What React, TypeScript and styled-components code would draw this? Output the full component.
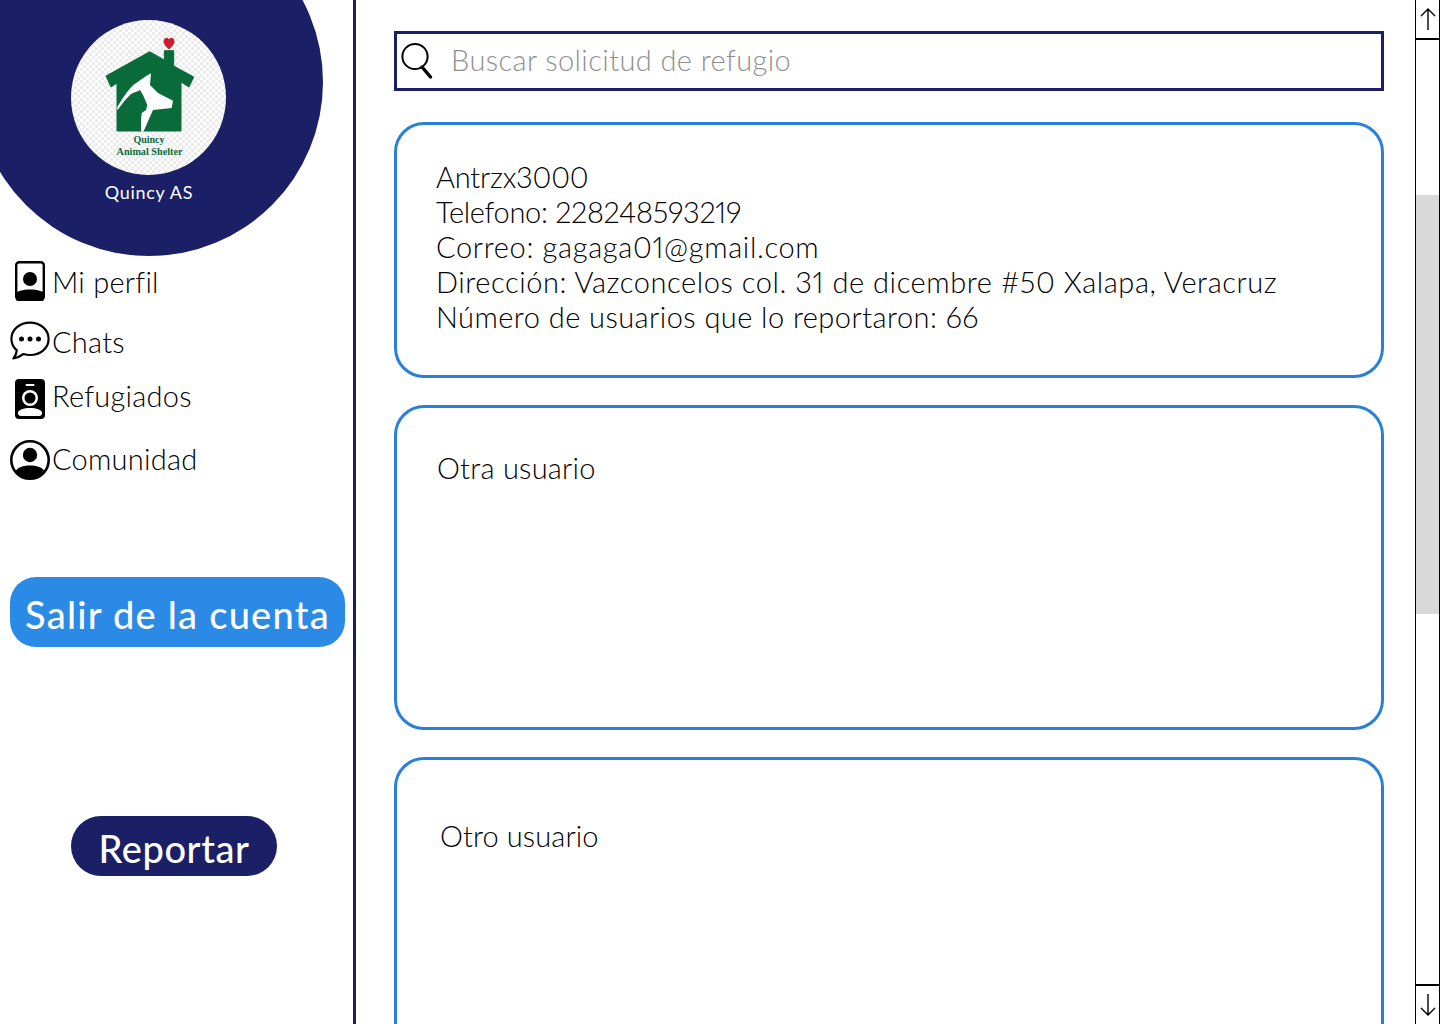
import styled, { createGlobalStyle } from 'styled-components';

const GlobalStyle = createGlobalStyle`
  * {
    box-sizing: border-box;
  }
  html, body {
    margin: 0;
    height: 1024px;
    overflow: hidden;
    background: #fff;
    font-family: 'Lato', 'Noto Sans', sans-serif;
    font-variant-numeric: proportional-nums;
  }
`;

const Page = styled.div`
  display: flex;
  width: 1440px;
  height: 1024px;
  overflow: hidden;
`;

// ----------------------------- //

const Sidebar = styled.aside`
  display: flex;
  flex-direction: column;
  flex: 0 0 356px;
  height: 100%;
  border-right: 3px solid #1b1f66;
  overflow: hidden;
`;

const ProfileDisc = styled.div`
  display: flex;
  flex-direction: column;
  align-items: center;
  flex: 0 0 348px;
  width: 348px;
  margin: -92px 0 0 -25px;
  padding-top: 112px;
  border-radius: 50%;
  background: #1b1f66;
`;

const LogoBadge = styled.div`
  width: 155px;
  height: 155px;
  margin-right: 2px;
  border-radius: 50%;
  overflow: hidden;
  background-color: #fff;
  background-image: conic-gradient(#ececec 25%, #fff 0 50%, #ececec 0 75%, #fff 0);
  background-size: 6px 6px;

  > svg {
    display: block;
  }
`;

const ShelterName = styled.div`
  margin-top: 6px;
  color: #fff;
  font-size: 18px;
  line-height: 22px;
  letter-spacing: 0.7px;
`;

const Nav = styled.nav`
  display: flex;
  flex-direction: column;
  padding: 5px 0 0 10px;
`;

const NavItem = styled.div<{ $gap: number; $shift: number }>`
  display: flex;
  align-items: center;
  height: 40px;
  margin-bottom: ${(p) => p.$gap}px;
  color: #000;
  font-size: 29px;
  font-weight: 300;
  letter-spacing: 0.25px;

  > span {
    transform: translateY(${(p) => p.$shift}px);
  }
`;

const IconBox = styled.div`
  display: flex;
  justify-content: center;
  flex: 0 0 42px;
  height: 40px;
  padding-right: 2px;
`;

const LogoutButton = styled.button`
  width: 335px;
  height: 70px;
  margin: 97px 0 0 10px;
  padding: 4px 0 0;
  border: 0;
  border-radius: 26px;
  background: #2a8ae6;
  color: #fff;
  font: 500 38px 'Lato', sans-serif;
  letter-spacing: 1.25px;
`;

const ReportButton = styled.button`
  width: 206px;
  height: 60px;
  margin: 169px 0 0 71px;
  padding: 4px 0 0;
  border: 0;
  border-radius: 30px;
  background: #1b1f66;
  color: #fff;
  font: 500 38px 'Lato', sans-serif;
  letter-spacing: 0.6px;
`;

// ----------------------------- //

const Main = styled.main`
  display: flex;
  flex-direction: column;
  flex: 1;
  padding: 31px 31px 0 38px;
  overflow: hidden;
`;

const SearchBar = styled.label`
  display: flex;
  align-items: center;
  flex: 0 0 60px;
  margin-bottom: 31px;
  padding-left: 4px;
  border: 3px solid #1b1f66;
  background: #fff;

  > svg {
    flex: 0 0 auto;
  }
`;

const SearchInput = styled.input`
  flex: 1;
  height: 100%;
  margin-left: 18px;
  padding: 0 0 4px;
  border: 0;
  outline: 0;
  background: transparent;
  font: 300 29px 'Lato', sans-serif;
  letter-spacing: 0.4px;

  &::placeholder {
    color: #8f8f8f;
    opacity: 1;
  }
`;

const CardList = styled.div`
  display: flex;
  flex-direction: column;
  gap: 27px;
`;

const Card = styled.section<{ $height: number; $top: number; $left: number }>`
  flex: 0 0 ${(p) => p.$height}px;
  padding: ${(p) => p.$top}px 20px 0 ${(p) => p.$left}px;
  border: 3px solid #2a80d8;
  border-radius: 30px;
  color: #000;
  font-size: 29px;
  font-weight: 300;
  line-height: 35px;
`;

const CardLine = styled.div<{ $tracking: number }>`
  white-space: nowrap;
  letter-spacing: ${(p) => p.$tracking}px;
`;

// ----------------------------- //

const Scrollbar = styled.div`
  display: flex;
  flex-direction: column;
  flex: 0 0 25px;
  height: 100%;
  border-left: 1px solid #000;
  border-right: 1px solid #000;
`;

const ScrollButton = styled.div<{ $edge: 'top' | 'bottom' }>`
  display: flex;
  align-items: center;
  justify-content: center;
  flex: 0 0 40px;
  border-${(p) => (p.$edge === 'top' ? 'bottom' : 'top')}: 2px solid #000;
`;

const ScrollTrack = styled.div`
  flex: 1;
  padding-top: 155px;
`;

const ScrollThumb = styled.div`
  height: 419px;
  background: #d9d9d9;
`;

// ----------------------------- //

function ShelterLogo() {
  return (
    <svg width="155" height="155" viewBox="71 20 155 155">
      <path
        d="M169 49.5 C166 46.5 163.5 44.5 163.5 41.5 C163.5 37.5 168 36.5 169 39.5 C170 36.5 174.5 37.5 174.5 41.5 C174.5 44.5 172 46.5 169 49.5 Z"
        fill="#c8202f"
      />
      <path
        d="M149.7 51.7 L164.3 60 L164.3 50.7 L173.7 50.7 L173.7 66 L193.7 77 L189 87 L181 82 L181 131 L117 131 L117 83 L111 87 L106 76 Z"
        fill="#0a6b3a"
        stroke="#0a6b3a"
        strokeWidth="1"
        strokeLinejoin="round"
      />
      <path
        d="M117.3 107 C122 99 128 90 133.3 85 L145 76.7 L147 75.5 L151 73.3 L150 85 L158 93 L173 100.7 L171.7 108 L153 110 L150 116.7 L143.5 131.5 L141.2 131.5 L141 120 L141.7 113 L146 110 L147.3 105 L143 95 L140 90 L136.7 91.7 C134 92.5 132 93 130 95 C125 100 121 105 117.3 110.5 Z"
        fill="#fff"
      />
      <text
        x="149"
        y="143"
        textAnchor="middle"
        fontFamily="Liberation Serif, serif"
        fontWeight="700"
        fontSize="10"
        fill="#0a6b3a"
      >
        Quincy
      </text>
      <text
        x="149.5"
        y="155"
        textAnchor="middle"
        fontFamily="Liberation Serif, serif"
        fontWeight="700"
        fontSize="10.2"
        fill="#0a6b3a"
      >
        Animal Shelter
      </text>
    </svg>
  );
}

function ProfileIcon() {
  return (
    <svg width="30" height="40" viewBox="0 0 30 40">
      <rect x="1.2" y="1.2" width="27.6" height="37.6" rx="3" fill="#fff" stroke="#000" strokeWidth="2.4" />
      <circle cx="15" cy="18" r="7" />
      <path d="M1 38 V33 C1 30 8 28.5 15 28.5 C22 28.5 29 30 29 33 V38 Q29 40 27 40 H3 Q1 40 1 38 Z" />
    </svg>
  );
}

function ChatIcon() {
  return (
    <svg width="40" height="40" viewBox="0 0 40 40">
      <path
        d="M20 1.6 C30 1.6 38.6 8.4 38.6 18 C38.6 27.6 30 34 20 34 C17.5 34 15.5 33.6 13.5 33 C10 35.5 6.5 37 3.4 37.5 C5.5 35 6.6 32.5 6.8 29.4 C3.4 26.4 1.4 22.6 1.4 18 C1.4 8.4 10 1.6 20 1.6 Z"
        fill="none"
        stroke="#000"
        strokeWidth="2.2"
        strokeLinejoin="round"
      />
      <circle cx="11.5" cy="18" r="2.5" />
      <circle cx="20" cy="18" r="2.5" />
      <circle cx="28.5" cy="18" r="2.5" />
    </svg>
  );
}

function BadgeIcon() {
  return (
    <svg width="30" height="40" viewBox="0 0 30 40">
      <rect width="30" height="40" rx="4" />
      <rect x="10.5" y="5" width="9" height="2" rx="1" fill="#fff" />
      <circle cx="15" cy="19" r="8" fill="#fff" />
      <circle cx="15" cy="19" r="5.5" />
      <path d="M3 34 C3 30.5 9 29 15 29 C21 29 27 30.5 27 34 C27 36 26 37 24 37 H6 C4 37 3 36 3 34 Z" fill="#fff" />
    </svg>
  );
}

function PersonCircleIcon() {
  return (
    <svg width="40" height="40" viewBox="0 0 40 40">
      <circle cx="20" cy="20" r="18.7" fill="#fff" stroke="#000" strokeWidth="2.6" />
      <circle cx="20" cy="15" r="7.2" />
      <path d="M5 32 C7 27 14 25.5 20 25.5 C26 25.5 33 27 35 32 C31 37 26 39 20 39 C14 39 9 37 5 32 Z" />
    </svg>
  );
}

function SearchIcon() {
  return (
    <svg width="32" height="38" viewBox="0 0 32 38">
      <circle cx="14" cy="14.5" r="12.6" fill="none" stroke="#000" strokeWidth="2" />
      <path d="M21 25 L29.5 35" stroke="#000" strokeWidth="3.4" strokeLinecap="round" />
    </svg>
  );
}

function ArrowIcon({ down = false }: { down?: boolean }) {
  return (
    <svg width="16" height="22" viewBox="0 0 16 22">
      <path
        d={down ? 'M8 0 V21 M1 14 L8 21 L15 14' : 'M8 22 V1 M1 8 L8 1 L15 8'}
        fill="none"
        stroke="#000"
        strokeWidth="1.4"
      />
    </svg>
  );
}

export default function App() {
  return (
    <Page>
      <GlobalStyle />
      <Sidebar>
        <ProfileDisc>
          <LogoBadge>
            <ShelterLogo />
          </LogoBadge>
          <ShelterName>Quincy AS</ShelterName>
        </ProfileDisc>

        <Nav>
          <NavItem $gap={20} $shift={0}>
            <IconBox><ProfileIcon /></IconBox>
            <span>Mi perfil</span>
          </NavItem>
          <NavItem $gap={18} $shift={0}>
            <IconBox><ChatIcon /></IconBox>
            <span>Chats</span>
          </NavItem>
          <NavItem $gap={21} $shift={-4}>
            <IconBox><BadgeIcon /></IconBox>
            <span>Refugiados</span>
          </NavItem>
          <NavItem $gap={0} $shift={-2}>
            <IconBox><PersonCircleIcon /></IconBox>
            <span>Comunidad</span>
          </NavItem>
        </Nav>

        <LogoutButton>Salir de la cuenta</LogoutButton>
        <ReportButton>Reportar</ReportButton>
      </Sidebar>

      <Main>
        <SearchBar>
          <SearchIcon />
          <SearchInput placeholder="Buscar solicitud de refugio" />
        </SearchBar>

        <CardList>
          <Card $height={256} $top={34} $left={39}>
            <CardLine $tracking={-0.2}>Antrzx3000</CardLine>
            <CardLine $tracking={-0.3}>Telefono: 228248593219</CardLine>
            <CardLine $tracking={0.65}>Correo: gagaga01@gmail.com</CardLine>
            <CardLine $tracking={0.57}>Dirección: Vazconcelos col. 31 de dicembre #50 Xalapa, Veracruz</CardLine>
            <CardLine $tracking={0.45}>Número de usuarios que lo reportaron: 66</CardLine>
          </Card>
          <Card $height={325} $top={42} $left={40}>
            <CardLine $tracking={0.25}>Otra usuario</CardLine>
          </Card>
          <Card $height={420} $top={58} $left={43}>
            <CardLine $tracking={0.1}>Otro usuario</CardLine>
          </Card>
        </CardList>
      </Main>

      <Scrollbar>
        <ScrollButton $edge="top"><ArrowIcon /></ScrollButton>
        <ScrollTrack>
          <ScrollThumb />
        </ScrollTrack>
        <ScrollButton $edge="bottom"><ArrowIcon down /></ScrollButton>
      </Scrollbar>
    </Page>
  );
}
